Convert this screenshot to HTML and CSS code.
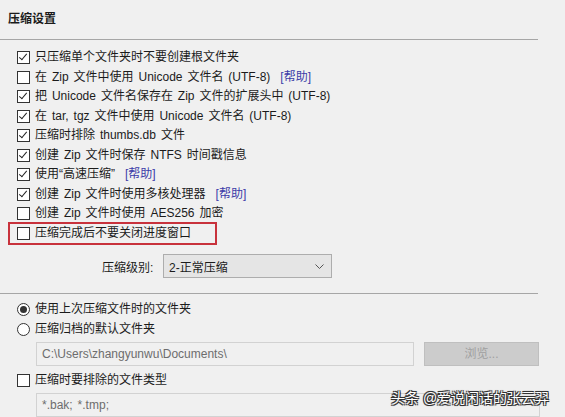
FILE: index.html
```html
<!DOCTYPE html>
<html lang="zh-CN">
<head>
  <meta charset="UTF-8">
  <meta name="viewport" content="width=device-width, initial-scale=1.0">
  <title>压缩设置</title>
  <link rel="stylesheet" href="styles.css">
</head>
<body>
  <div class="page">
    <div class="title">压缩设置</div>
    <div class="rule"></div>

    <div class="options">
      <label class="row"><span class="box checked"></span>只压缩单个文件夹时不要创建根文件夹</label>
      <label class="row"><span class="box"></span>在 Zip 文件中使用 Unicode 文件名 (UTF-8)<a class="help">[帮助]</a></label>
      <label class="row"><span class="box checked"></span>把 Unicode 文件名保存在 Zip 文件的扩展头中 (UTF-8)</label>
      <label class="row"><span class="box checked"></span>在 tar, tgz 文件中使用 Unicode 文件名 (UTF-8)</label>
      <label class="row"><span class="box checked"></span>压缩时排除 thumbs.db 文件</label>
      <label class="row"><span class="box checked"></span>创建 Zip 文件时保存 NTFS 时间戳信息</label>
      <label class="row"><span class="box checked"></span>使用“高速压缩”<a class="help">[帮助]</a></label>
      <label class="row"><span class="box checked"></span>创建 Zip 文件时使用多核处理器<a class="help">[帮助]</a></label>
      <label class="row"><span class="box"></span>创建 Zip 文件时使用 AES256 加密</label>
      <label class="row highlight"><span class="box"></span>压缩完成后不要关闭进度窗口</label>
    </div>

    <div class="level">
      <span class="level-label">压缩级别:</span>
      <div class="select">
        <span>2-正常压缩</span>
        <svg class="arrow" width="9" height="5" viewBox="0 0 9 5"><polyline points="0.5,0.5 4.5,4.5 8.5,0.5" fill="none" stroke="#555" stroke-width="1"/></svg>
      </div>
    </div>

    <div class="rule rule-second"></div>

    <div class="folders">
      <label class="row"><span class="radio checked"></span>使用上次压缩文件时的文件夹</label>
      <label class="row"><span class="radio"></span>压缩归档的默认文件夹</label>
      <div class="path-row">
        <div class="field path">C:\Users\zhangyunwu\Documents\</div>
        <div class="button">浏览...</div>
      </div>
      <label class="row row-exclude"><span class="box"></span>压缩时要排除的文件类型</label>
      <div class="field exclude">*.bak; *.tmp;</div>
    </div>
  </div>

  <div class="watermark">头条 @爱说闲话的张云羿</div>
</body>
</html>
```

FILE: styles.css
```css
body {
  margin: 0;
  background: #f0f0f0;
  font-family: "Liberation Sans", "Noto Sans CJK SC", sans-serif;
  font-size: 12px;
  word-spacing: 1.6px;
  color: #1b1b1b;
  overflow: hidden;
  height: 417px;
}
.page {
  width: 565px;
}
.title {
  padding: 9px 8px 10px;
  line-height: 20px;
  font-weight: bold;
}
.rule {
  width: 538px;
  height: 0;
  border-top: 1px solid #a6a6a6;
}
.options {
  margin-top: 8px;
  padding-left: 17px;
}
.row {
  display: flex;
  align-items: center;
  height: 19.5px;
  line-height: 19.5px;
  white-space: nowrap;
  position: relative;
}
.box {
  width: 11px;
  height: 11px;
  border: 1px solid #333;
  background: #fff;
  margin-right: 5px;
  flex-shrink: 0;
  position: relative;
}
.box.checked::after {
  content: "";
  position: absolute;
  left: 3px;
  top: 0px;
  width: 3px;
  height: 7px;
  border-right: 1.3px solid #222;
  border-bottom: 1.3px solid #222;
  transform: rotate(40deg);
}
.help {
  color: #3c3ca8;
  margin-left: 10px;
}
.highlight::before {
  content: "";
  position: absolute;
  left: -9px;
  top: -1.5px;
  width: 205px;
  height: 19px;
  border: 2px solid #c8323c;
}
.level {
  display: flex;
  align-items: center;
  margin-top: 11px;
  padding-left: 102px;
}
.level-label {
  width: 61px;
}
.select {
  box-sizing: border-box;
  width: 169px;
  height: 24px;
  border: 1px solid #adadad;
  background: #e5e5e5;
  display: flex;
  align-items: center;
  justify-content: space-between;
  padding: 0 7px 0 5px;
}
.rule-second {
  margin-top: 15px;
}
.folders {
  margin-top: 6px;
  padding-left: 17px;
}
.radio {
  box-sizing: border-box;
  width: 13px;
  height: 13px;
  border: 1px solid #333;
  border-radius: 50%;
  background: #fff;
  margin-right: 5px;
  flex-shrink: 0;
  position: relative;
}
.radio.checked::after {
  content: "";
  position: absolute;
  left: 2px;
  top: 2px;
  width: 7px;
  height: 7px;
  border-radius: 50%;
  background: #333;
}
.path-row {
  display: flex;
  gap: 10px;
  margin-top: 3px;
  padding-left: 19px;
}
.field {
  box-sizing: border-box;
  height: 24px;
  line-height: 22px;
  border: 1px solid #d2d2d2;
  background: #f0f0f0;
  color: #6d6d6d;
  padding-left: 5px;
}
.path {
  width: 378px;
}
.button {
  box-sizing: border-box;
  width: 115px;
  height: 24px;
  line-height: 22px;
  border: 1px solid #bfbfbf;
  background: #cccccc;
  color: #a0a0a0;
  text-align: center;
}
.row-exclude {
  margin-top: 5px;
}
.exclude {
  width: 504px;
  margin-top: 2px;
  margin-left: 19px;
}
.watermark {
  position: absolute;
  left: 391px;
  top: 389px;
  font-size: 14px;
  line-height: 18px;
  word-spacing: 0;
  color: #fff;
  white-space: nowrap;
  text-shadow: -1px -1px 0 #333, 1px -1px 0 #333, -1px 1px 0 #333, 1px 1px 0 #333, 0 0 2px #000;
}
```
